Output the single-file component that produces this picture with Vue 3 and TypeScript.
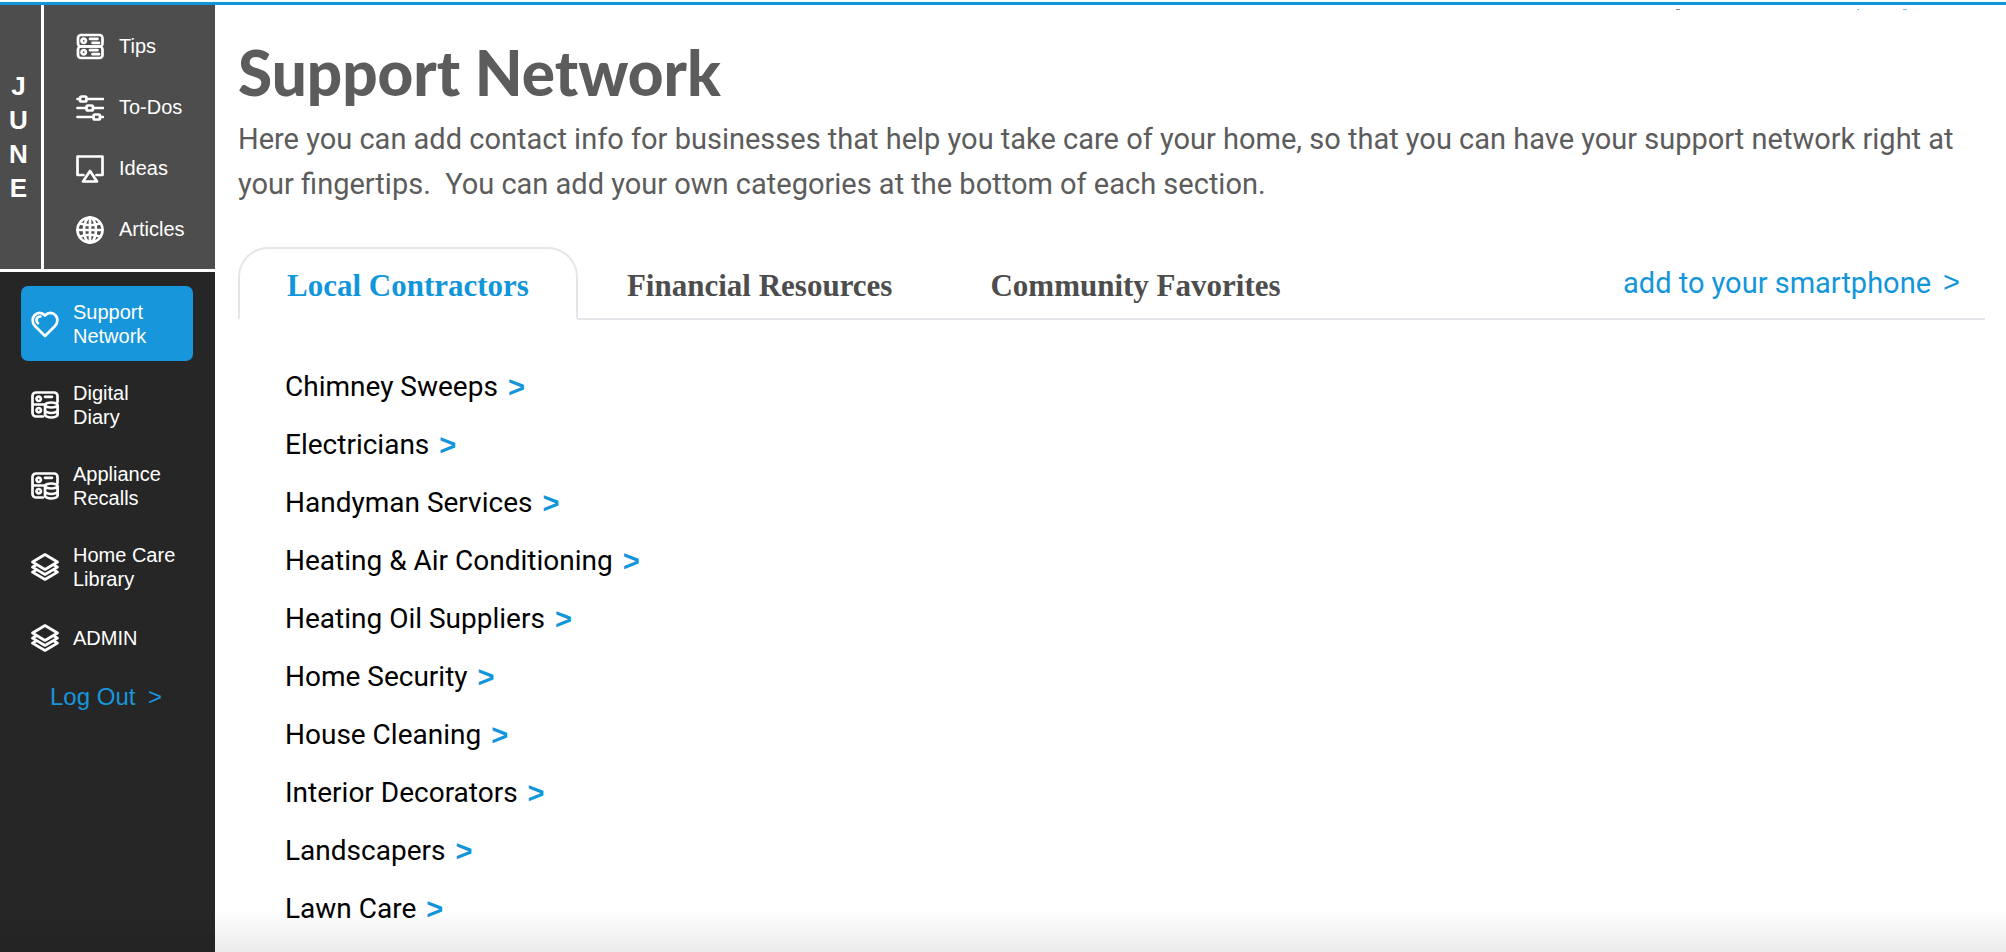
<script setup lang="ts">
import { ref } from 'vue'

interface NavItem {
  label: string
  icon: string
}

const monthLetters: string[] = ['J', 'U', 'N', 'E']

const monthItems: NavItem[] = [
  { label: 'Tips', icon: 'server' },
  { label: 'To-Dos', icon: 'sliders' },
  { label: 'Ideas', icon: 'airplay' },
  { label: 'Articles', icon: 'globe' },
]

const navItems: NavItem[] = [
  { label: 'Support Network', icon: 'heart' },
  { label: 'Digital Diary', icon: 'database' },
  { label: 'Appliance Recalls', icon: 'database' },
  { label: 'Home Care Library', icon: 'layers' },
  { label: 'ADMIN', icon: 'layers' },
]

const activeNav = ref('Support Network')

const tabs: string[] = ['Local Contractors', 'Financial Resources', 'Community Favorites']
const activeTab = ref(tabs[0])

const categories: string[] = [
  'Chimney Sweeps',
  'Electricians',
  'Handyman Services',
  'Heating & Air Conditioning',
  'Heating Oil Suppliers',
  'Home Security',
  'House Cleaning',
  'Interior Decorators',
  'Landscapers',
  'Lawn Care',
]

const iconPaths: Record<string, string[]> = {
  server: [
    'M5 2H23.500a3 3 0 0 1 3 3V10.500a3 3 0 0 1-3 3H5a3 3 0 0 1-3-3V5a3 3 0 0 1 3-3Z',
    'M5 13.500H23.500a3 3 0 0 1 3 3V22a3 3 0 0 1-3 3H5a3 3 0 0 1-3-3V16.500a3 3 0 0 1 3-3Z',
    'M5.500 7.800a2.200 2.200 0 1 0 4.400 0a2.200 2.200 0 1 0-4.400 0M5.500 19.200a2.200 2.200 0 1 0 4.400 0a2.200 2.200 0 1 0-4.400 0',
    'M14 5.800H21.500M16.500 9.800H23M14 17.200H21.500M16.500 21.200H23',
  ],
  sliders: [
    'M1.500 5H4M10.500 5H27M1.500 14H10.500M17 14H27M1.500 23H17.500M24 23H27',
    'M5.500 2.500H9a1.500 1.500 0 0 1 1.500 1.500V6A1.500 1.500 0 0 1 9 7.500H5.500A1.500 1.500 0 0 1 4 6V4A1.500 1.500 0 0 1 5.500 2.500Z',
    'M12 11.500H15.500a1.500 1.500 0 0 1 1.500 1.500V15a1.500 1.500 0 0 1-1.500 1.500H12a1.500 1.500 0 0 1-1.500-1.500V13a1.500 1.500 0 0 1 1.500-1.500Z',
    'M19 20.500H22.500a1.500 1.500 0 0 1 1.500 1.500V24a1.500 1.500 0 0 1-1.500 1.500H19a1.500 1.500 0 0 1-1.500-1.500V22a1.500 1.500 0 0 1 1.500-1.500Z',
  ],
  airplay: ['M7.500 20H1.500V1.500H26.500V20H20.500', 'M14 16L21 26.500H7Z'],
  globe: [
    'M1.500 14a12.500 12.500 0 1 0 25 0a12.500 12.500 0 1 0-25 0',
    'M8 14a6 12.500 0 1 0 12 0a6 12.500 0 1 0-12 0',
    'M14 1.500V26.500M1.500 14H26.500M4 7.500Q14 11 24 7.500M4 20.500Q14 17 24 20.500',
  ],
  heart: [
    'M14 26L4 16C-3 8 7-2 14 5.500C21-2 31 8 24 16Z',
    'M9.500 6.500C7 6.500 5.500 8 5.500 10C5.500 11.300 6 12.300 7 13.200',
  ],
  database: [
    'M12 25.500H5A3.500 3.500 0 0 1 1.500 22V5A3.500 3.500 0 0 1 5 1.500H23A3.500 3.500 0 0 1 26.500 5V11M1.500 13.500H14',
    'M5.500 7.800a2.200 2.200 0 1 0 4.400 0a2.200 2.200 0 1 0-4.400 0M5.500 19.200a2.200 2.200 0 1 0 4.400 0a2.200 2.200 0 1 0-4.400 0M14 5.800H21',
    'M14 14a6.300 2.500 0 1 0 12.600 0a6.300 2.500 0 1 0-12.600 0V23.500a6.300 3 0 0 0 12.600 0V14M14 19a6.300 3 0 0 0 12.600 0',
  ],
  layers: [
    'M14 1.500L26.500 9L14 16.500L1.500 9Z',
    'M5 12L1.500 14.200L14 21.500L26.500 14.200L23 12',
    'M5 17L1.500 19.200L14 26.500L26.500 19.200L23 17',
  ],
}
</script>

<template>
  <div class="page">
    <aside class="sidebar">
      <section class="month">
        <div class="month-name">
          <span v-for="letter in monthLetters" :key="letter">{{ letter }}</span>
        </div>
        <nav class="month-nav" aria-label="This month">
          <a v-for="item in monthItems" :key="item.label" class="month-link" href="#">
            <svg class="icon" viewBox="0 0 28 28" aria-hidden="true">
              <path v-for="d in iconPaths[item.icon]" :key="d" :d="d" />
            </svg>
            <span>{{ item.label }}</span>
          </a>
        </nav>
      </section>
      <nav class="main-nav" aria-label="Main">
        <a
          v-for="item in navItems"
          :key="item.label"
          class="nav-link"
          :class="{ active: item.label === activeNav, single: item.label === 'ADMIN' }"
          href="#"
          @click.prevent="activeNav = item.label"
        >
          <svg class="icon" viewBox="0 0 28 28" aria-hidden="true">
            <path v-for="d in iconPaths[item.icon]" :key="d" :d="d" />
          </svg>
          <span class="nav-text">{{ item.label }}</span>
        </a>
        <a class="logout" href="#">Log Out <span class="logout-arrow">&gt;</span></a>
      </nav>
    </aside>

    <main class="content">
      <div class="scrolled-line">
        <span class="speck"></span>
        <span class="speck blue narrow"></span>
        <span class="speck blue"></span>
      </div>
      <h1>Support Network</h1>
      <p class="intro">
        Here you can add contact info for businesses that help you take care of your home, so that
        you can have your support network right at your fingertips.&nbsp; You can add your own
        categories at the bottom of each section.
      </p>
      <div class="tab-bar">
        <div class="tabs" role="tablist">
          <button
            v-for="tab in tabs"
            :key="tab"
            type="button"
            role="tab"
            class="tab"
            :class="{ selected: tab === activeTab }"
            :aria-selected="tab === activeTab"
            @click="activeTab = tab"
          >
            {{ tab }}
          </button>
        </div>
        <div class="tab-rest">
          <a class="phone-link" href="#"><span>add to your smartphone</span><span class="phone-arrow">&gt;</span></a>
        </div>
      </div>
      <ul class="categories">
        <li v-for="category in categories" :key="category">
          <a href="#"><span>{{ category }}</span><span class="arrow">&gt;</span></a>
        </li>
      </ul>
    </main>
    <div class="fade"></div>
  </div>
</template>

<style>
body {
  margin: 0;
  background: #fff;
}
</style>

<style scoped>
.page {
  position: relative;
  box-sizing: border-box;
  display: flex;
  min-height: 100vh;
  padding-top: 2px;
  font-family: 'Liberation Sans', Arial, sans-serif;
}
.page::before {
  content: '';
  position: absolute;
  inset: 2px 0 auto;
  height: 3px;
  background: #1296db;
}
a {
  color: inherit;
  text-decoration: none;
}
.sidebar {
  flex: none;
  display: flex;
  flex-direction: column;
  width: 215px;
  margin-top: 3px;
  background: #262626;
  color: #fff;
}
.month {
  display: flex;
  border-bottom: 3px solid #fff;
  background: #4d4d4d;
}
.month-name {
  display: flex;
  flex-direction: column;
  justify-content: center;
  width: 41px;
  padding-right: 4px;
  box-sizing: border-box;
  text-align: center;
  font-size: 26px;
  font-weight: 700;
  line-height: 34px;
}
.month-nav {
  flex: 1;
  padding: 11px 0 9px 32px;
  border-left: 3px solid #fff;
}
.month-link {
  display: flex;
  align-items: center;
  gap: 15px;
  height: 61px;
  font-size: 20px;
}
.icon {
  flex: none;
  width: 28px;
  height: 28px;
  fill: none;
  stroke: #fff;
  stroke-width: 2.7;
  stroke-linecap: round;
  stroke-linejoin: round;
}
.main-nav {
  display: flex;
  flex-direction: column;
  gap: 6px;
  padding: 14px 22px 0 21px;
}
.nav-link {
  display: flex;
  align-items: center;
  gap: 14px;
  height: 75px;
  padding: 0 10px;
  border-radius: 7px;
  font-size: 20px;
  line-height: 24px;
}
.nav-link.single {
  height: 56px;
}
.nav-link.active {
  background: #1896db;
}
.nav-text {
  max-width: 104px;
}
.logout {
  padding-left: 29px;
  color: #1896db;
  font-size: 24px;
  line-height: 50px;
}
.logout-arrow {
  margin-left: 6px;
}
.content {
  flex: 1;
  min-width: 0;
  padding: 7px 21px 0 23px;
}
.scrolled-line {
  display: flex;
  justify-content: flex-end;
  height: 1px;
  padding-right: 78px;
}
.speck {
  width: 4px;
  background: #8c8c8c;
}
.speck.blue {
  margin-left: 44px;
  background: #7cc0e8;
}
.speck.narrow {
  width: 2px;
  margin-left: 177px;
}
h1 {
  margin: 26px 0 0;
  color: #5c5c5c;
  font-family: Lato, sans-serif;
  font-size: 62px;
  font-weight: 900;
  line-height: 72px;
}
.intro {
  margin: 9px 0 0;
  color: #5c5c5c;
  font-family: Roboto, sans-serif;
  font-size: 29px;
  font-weight: 400;
  line-height: 45px;
}
.tab-bar {
  display: flex;
  margin-top: 40px;
}
.tabs {
  display: flex;
}
.tab {
  height: 73px;
  padding: 4px 47px 0;
  border: 2px solid transparent;
  border-bottom-color: #e5e5ea;
  background: none;
  color: #4d4d4d;
  font-family: 'Liberation Serif', serif;
  font-size: 31px;
  font-weight: 700;
}
.tab:not(.selected) {
  border-width: 2px 0;
  padding: 4px 49px 0;
}
.tab.selected {
  border-color: #e5e5ea #e5e5ea transparent;
  border-radius: 30px 30px 0 0;
  color: #1296db;
}
.tab-rest {
  flex: 1;
  display: flex;
  align-items: center;
  justify-content: flex-end;
  padding-right: 25px;
  border-bottom: 2px solid #e5e5ea;
}
.phone-link {
  display: flex;
  gap: 12px;
  color: #1296db;
  font-family: Roboto, sans-serif;
  font-size: 29px;
}
.phone-arrow {
  font-family: 'Liberation Sans', Arial, sans-serif;
  font-size: 29px;
}
.categories {
  margin: 38px 0 0;
  padding: 0 0 8px 47px;
  list-style: none;
  color: #000;
  font-family: Roboto, sans-serif;
  font-size: 28px;
  line-height: 58px;
}
.categories a {
  display: inline-flex;
  gap: 10px;
}
.arrow {
  color: #1296db;
  font-family: 'Liberation Sans', Arial, sans-serif;
  font-size: 29px;
  font-weight: 700;
}
.fade {
  position: absolute;
  inset: auto 0 0;
  height: 42px;
  background: linear-gradient(rgba(0, 0, 0, 0), rgba(0, 0, 0, 0.08));
  pointer-events: none;
}
</style>
